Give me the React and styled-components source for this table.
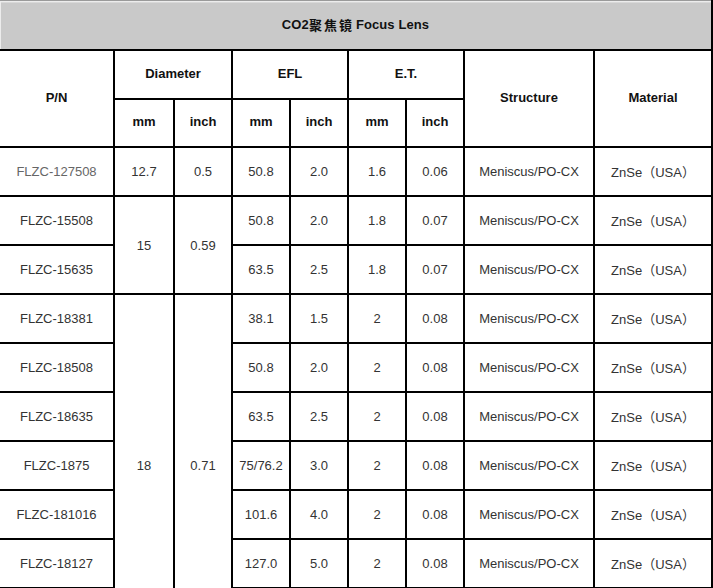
import React from "react";
import styled, { createGlobalStyle } from "styled-components";

const Global = createGlobalStyle`
  html, body { margin: 0; padding: 0; background: #fff; overflow: hidden; }
  * { box-sizing: border-box; }
`;

const Frame = styled.div`
  width: 713px;
  height: 588px;
  overflow: hidden;
  font-family: "Liberation Sans", Arial, "Noto Sans CJK SC", sans-serif;
  font-size: 13px;
`;

const Grid = styled.div`
  display: grid;
  grid-template-columns: 113px 58px 56px 56px 56px 56px 56px 128px 116px;
  grid-template-rows: 49px 47px 46px;
  grid-auto-rows: 47px;
  gap: 2px;
  padding-right: 2px;
  background: #000;
`;

const Title = styled.div`
  grid-column: 1 / -1;
  display: flex;
  align-items: center;
  justify-content: center;
  padding-bottom: 2px;
  background: #c9c9c9;
  border-top: 1px solid #9a9a9a;
  box-shadow: inset 1px 1px 0 #ececec, inset 0 2px 0 #d8d8d8;
  color: #111;
  font-weight: bold;
  letter-spacing: 0.1px;
`;

const Cjk = styled.span`
  font-family: "Noto Sans CJK SC", sans-serif;
  font-weight: bold;
  font-size: 13px;
  letter-spacing: 2px;
  margin-right: 2px;
`;

const Cell = styled.div`
  display: flex;
  align-items: center;
  justify-content: center;
  background: #fff;
  white-space: nowrap;
  grid-row: ${(p) => (p.$rows ? `span ${p.$rows}` : "auto")};
  grid-column: ${(p) => (p.$cols ? `span ${p.$cols}` : "auto")};
  color: ${(p) => (p.$muted ? "#666" : "#333")};
`;

const Head = styled(Cell)`
  padding-bottom: 3px;
  font-weight: bold;
  color: #111;
`;

const rows = [
  { pn: "FLZC-127508", muted: true, dia: { mm: "12.7", inch: "0.5", span: 1 }, efl: ["50.8", "2.0"], et: ["1.6", "0.06"] },
  { pn: "FLZC-15508", dia: { mm: "15", inch: "0.59", span: 2 }, efl: ["50.8", "2.0"], et: ["1.8", "0.07"] },
  { pn: "FLZC-15635", efl: ["63.5", "2.5"], et: ["1.8", "0.07"] },
  { pn: "FLZC-18381", dia: { mm: "18", inch: "0.71", span: 7 }, efl: ["38.1", "1.5"], et: ["2", "0.08"] },
  { pn: "FLZC-18508", efl: ["50.8", "2.0"], et: ["2", "0.08"] },
  { pn: "FLZC-18635", efl: ["63.5", "2.5"], et: ["2", "0.08"] },
  { pn: "FLZC-1875", efl: ["75/76.2", "3.0"], et: ["2", "0.08"] },
  { pn: "FLZC-181016", efl: ["101.6", "4.0"], et: ["2", "0.08"] },
  { pn: "FLZC-18127", efl: ["127.0", "5.0"], et: ["2", "0.08"] },
  { pn: "", efl: ["", ""], et: ["", ""], blank: true },
];

export default function App() {
  return (
    <Frame>
      <Global />
      <Grid>
        <Title>
          CO2<Cjk>聚焦镜</Cjk> Focus Lens
        </Title>
        <Head $rows={2}>P/N</Head>
        <Head $cols={2}>Diameter</Head>
        <Head $cols={2}>EFL</Head>
        <Head $cols={2}>E.T.</Head>
        <Head $rows={2}>Structure</Head>
        <Head $rows={2}>Material</Head>
        <Head>mm</Head>
        <Head>inch</Head>
        <Head>mm</Head>
        <Head>inch</Head>
        <Head>mm</Head>
        <Head>inch</Head>
        {rows.map((r, i) => (
          <React.Fragment key={i}>
            <Cell $muted={r.muted}>{r.pn}</Cell>
            {r.dia && <Cell $rows={r.dia.span}>{r.dia.mm}</Cell>}
            {r.dia && <Cell $rows={r.dia.span}>{r.dia.inch}</Cell>}
            <Cell>{r.efl[0]}</Cell>
            <Cell>{r.efl[1]}</Cell>
            <Cell>{r.et[0]}</Cell>
            <Cell>{r.et[1]}</Cell>
            <Cell>{r.blank ? "" : "Meniscus/PO-CX"}</Cell>
            <Cell>{r.blank ? "" : "ZnSe（USA）"}</Cell>
          </React.Fragment>
        ))}
      </Grid>
    </Frame>
  );
}
